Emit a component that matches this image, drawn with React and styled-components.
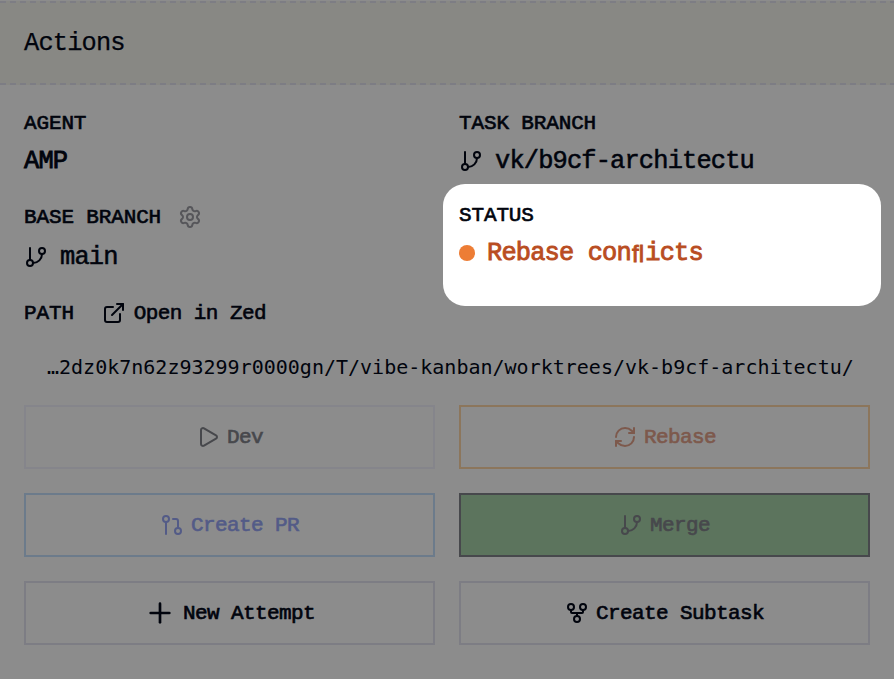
import React from 'react';
import styled, { createGlobalStyle } from 'styled-components';
import {
  GitBranch,
  Settings,
  ExternalLink,
  Play,
  RefreshCw,
  GitPullRequest,
  Plus,
  GitFork,
} from 'lucide-react';

const GlobalStyle = createGlobalStyle`
  * { box-sizing: border-box; }
  body { margin: 0; background: #8c8c8c; overflow: hidden; }
`;

const Panel = styled.main`
  width: 894px;
  height: 679px;
  padding-top: 1px;
  background: #8c8c8c;
  color: #01040d;
  font-family: 'Liberation Mono', monospace;
  font-size: 25.4px;
  letter-spacing: -0.85px;
  white-space: nowrap;
  overflow: hidden;
`;

const dashes = 'repeating-linear-gradient(90deg, #7d7d84 0 6px, transparent 6px 10px)';

const Header = styled.header`
  height: 84px;
  padding: 2px 24px 0;
  display: flex;
  align-items: center;
  background: ${dashes} 0 0 / 100% 2px no-repeat, ${dashes} 0 100% / 100% 2px no-repeat, #888884;
`;

const Title = styled.h1`
  margin: 0;
  font-size: inherit;
  font-weight: 400;
  line-height: 32px;
  -webkit-text-stroke: 0.25px currentColor;
`;

const Details = styled.section`
  display: grid;
  grid-template-columns: 411px 411px;
  column-gap: 24px;
  padding: 24px 24px 0;
`;

const Column = styled.div`
  display: flex;
  flex-direction: column;
`;

const Field = styled.div`
  display: flex;
  flex-direction: column;
  gap: 8px;
  margin-bottom: ${(p) => p.$after || 0}px;
`;

const LabelRow = styled.div`
  height: ${(p) => p.$height || 28}px;
  display: flex;
  align-items: center;
  gap: ${(p) => p.$gap || 17}px;
`;

const Label = styled.span`
  padding-top: 2px;
  font-size: 21px;
  letter-spacing: -0.14px;
  line-height: 28px;
  -webkit-text-stroke: 0.65px currentColor;
`;

const Value = styled.div`
  height: 32px;
  padding-top: 2px;
  display: flex;
  align-items: center;
  gap: 12px;
  line-height: 30px;
  -webkit-text-stroke: ${(p) => (p.$heavy ? 0.85 : 0.55)}px currentColor;
  svg { margin-top: -2px; -webkit-text-stroke: 0; }
`;

const GearButton = styled.button`
  display: flex;
  padding: 0;
  border: 0;
  background: none;
  color: #56565a;
`;

const OpenLink = styled.button`
  display: flex;
  align-items: center;
  gap: 8px;
  padding: 2px 0 0;
  border: 0;
  background: none;
  color: inherit;
  font: inherit;
  font-size: 21px;
  letter-spacing: -0.6px;
  line-height: 28px;
  -webkit-text-stroke: 0.6px currentColor;
  svg { margin-top: -2px; }
`;

const StatusCard = styled.div`
  width: 438px;
  height: 122px;
  margin: 7px 0 0 -16px;
  padding: 17px 16px 0;
  border-radius: 22px;
  background: #fff;
`;

const StatusText = styled.span`
  display: flex;
  color: #b94d22;
  white-space: pre;
`;

const Dot = styled.span`
  width: 16px;
  height: 16px;
  margin-top: -2px;
  border-radius: 50%;
  background: #ed7d35;
`;

const Ligature = styled.span`
  display: inline-block;
  width: 14.4px;
  text-align: center;
  font-family: 'Liberation Sans', sans-serif;
  font-size: 24px;
  letter-spacing: 0;
`;

const Path = styled.div`
  margin-top: 24px;
  padding-left: 47px;
  font-family: 'DejaVu Sans Mono', monospace;
  font-size: 20px;
  letter-spacing: 0;
  line-height: 28px;
`;

const Buttons = styled.section`
  display: grid;
  grid-template-columns: 411px 411px;
  gap: 24px;
  padding: 24px 24px 0;
`;

const ActionButton = styled.button`
  height: 64px;
  display: flex;
  align-items: center;
  justify-content: center;
  gap: 7px;
  padding: 0;
  border: 2px solid ${(p) => p.$border || '#7d7d84'};
  border-radius: 0;
  background: ${(p) => p.$fill || 'transparent'};
  color: ${(p) => p.$color || '#01040d'};
  font: inherit;
  font-size: 21px;
  letter-spacing: -0.6px;
  -webkit-text-stroke: 0.65px currentColor;
  svg { -webkit-text-stroke: 0; }
`;

export default function App() {
  return (
    <>
      <GlobalStyle />
      <Panel>
        <Header>
          <Title>Actions</Title>
        </Header>
        <Details>
          <Column>
            <Field $after={24}>
              <LabelRow><Label>AGENT</Label></LabelRow>
              <Value $heavy>AMP</Value>
            </Field>
            <Field $after={24}>
              <LabelRow $height={32}>
                <Label>BASE BRANCH</Label>
                <GearButton aria-label="Branch settings"><Settings size={24} strokeWidth={2} /></GearButton>
              </LabelRow>
              <Value><GitBranch size={24} strokeWidth={2} />main</Value>
            </Field>
            <LabelRow $height={32} $gap={28}>
              <Label>PATH</Label>
              <OpenLink><ExternalLink size={24} strokeWidth={2} />Open in Zed</OpenLink>
            </LabelRow>
          </Column>
          <Column>
            <Field>
              <LabelRow><Label>TASK BRANCH</Label></LabelRow>
              <Value><GitBranch size={24} strokeWidth={2} />vk/b9cf-architectu</Value>
            </Field>
            <StatusCard>
              <Field>
                <LabelRow><Label>STATUS</Label></LabelRow>
                <Value $heavy>
                  <Dot />
                  <StatusText>Rebase con<Ligature>fl</Ligature>icts</StatusText>
                </Value>
              </Field>
            </StatusCard>
          </Column>
        </Details>
        <Path>…2dz0k7n62z93299r0000gn/T/vibe-kanban/worktrees/vk-b9cf-architectu/</Path>
        <Buttons>
          <ActionButton $border="#85858b" $color="#47484c"><Play size={24} strokeWidth={2} />Dev</ActionButton>
          <ActionButton $border="#8c765c" $color="#7d594c"><RefreshCw size={24} strokeWidth={2} />Rebase</ActionButton>
          <ActionButton $border="#6c7b8b" $color="#535b87"><GitPullRequest size={24} strokeWidth={2} />Create PR</ActionButton>
          <ActionButton $border="#47484c" $color="#47484c" $fill="#5c745d"><GitBranch size={24} strokeWidth={2} />Merge</ActionButton>
          <ActionButton><Plus size={32} strokeWidth={2} />New Attempt</ActionButton>
          <ActionButton><GitFork size={24} strokeWidth={2} />Create Subtask</ActionButton>
        </Buttons>
      </Panel>
    </>
  );
}
